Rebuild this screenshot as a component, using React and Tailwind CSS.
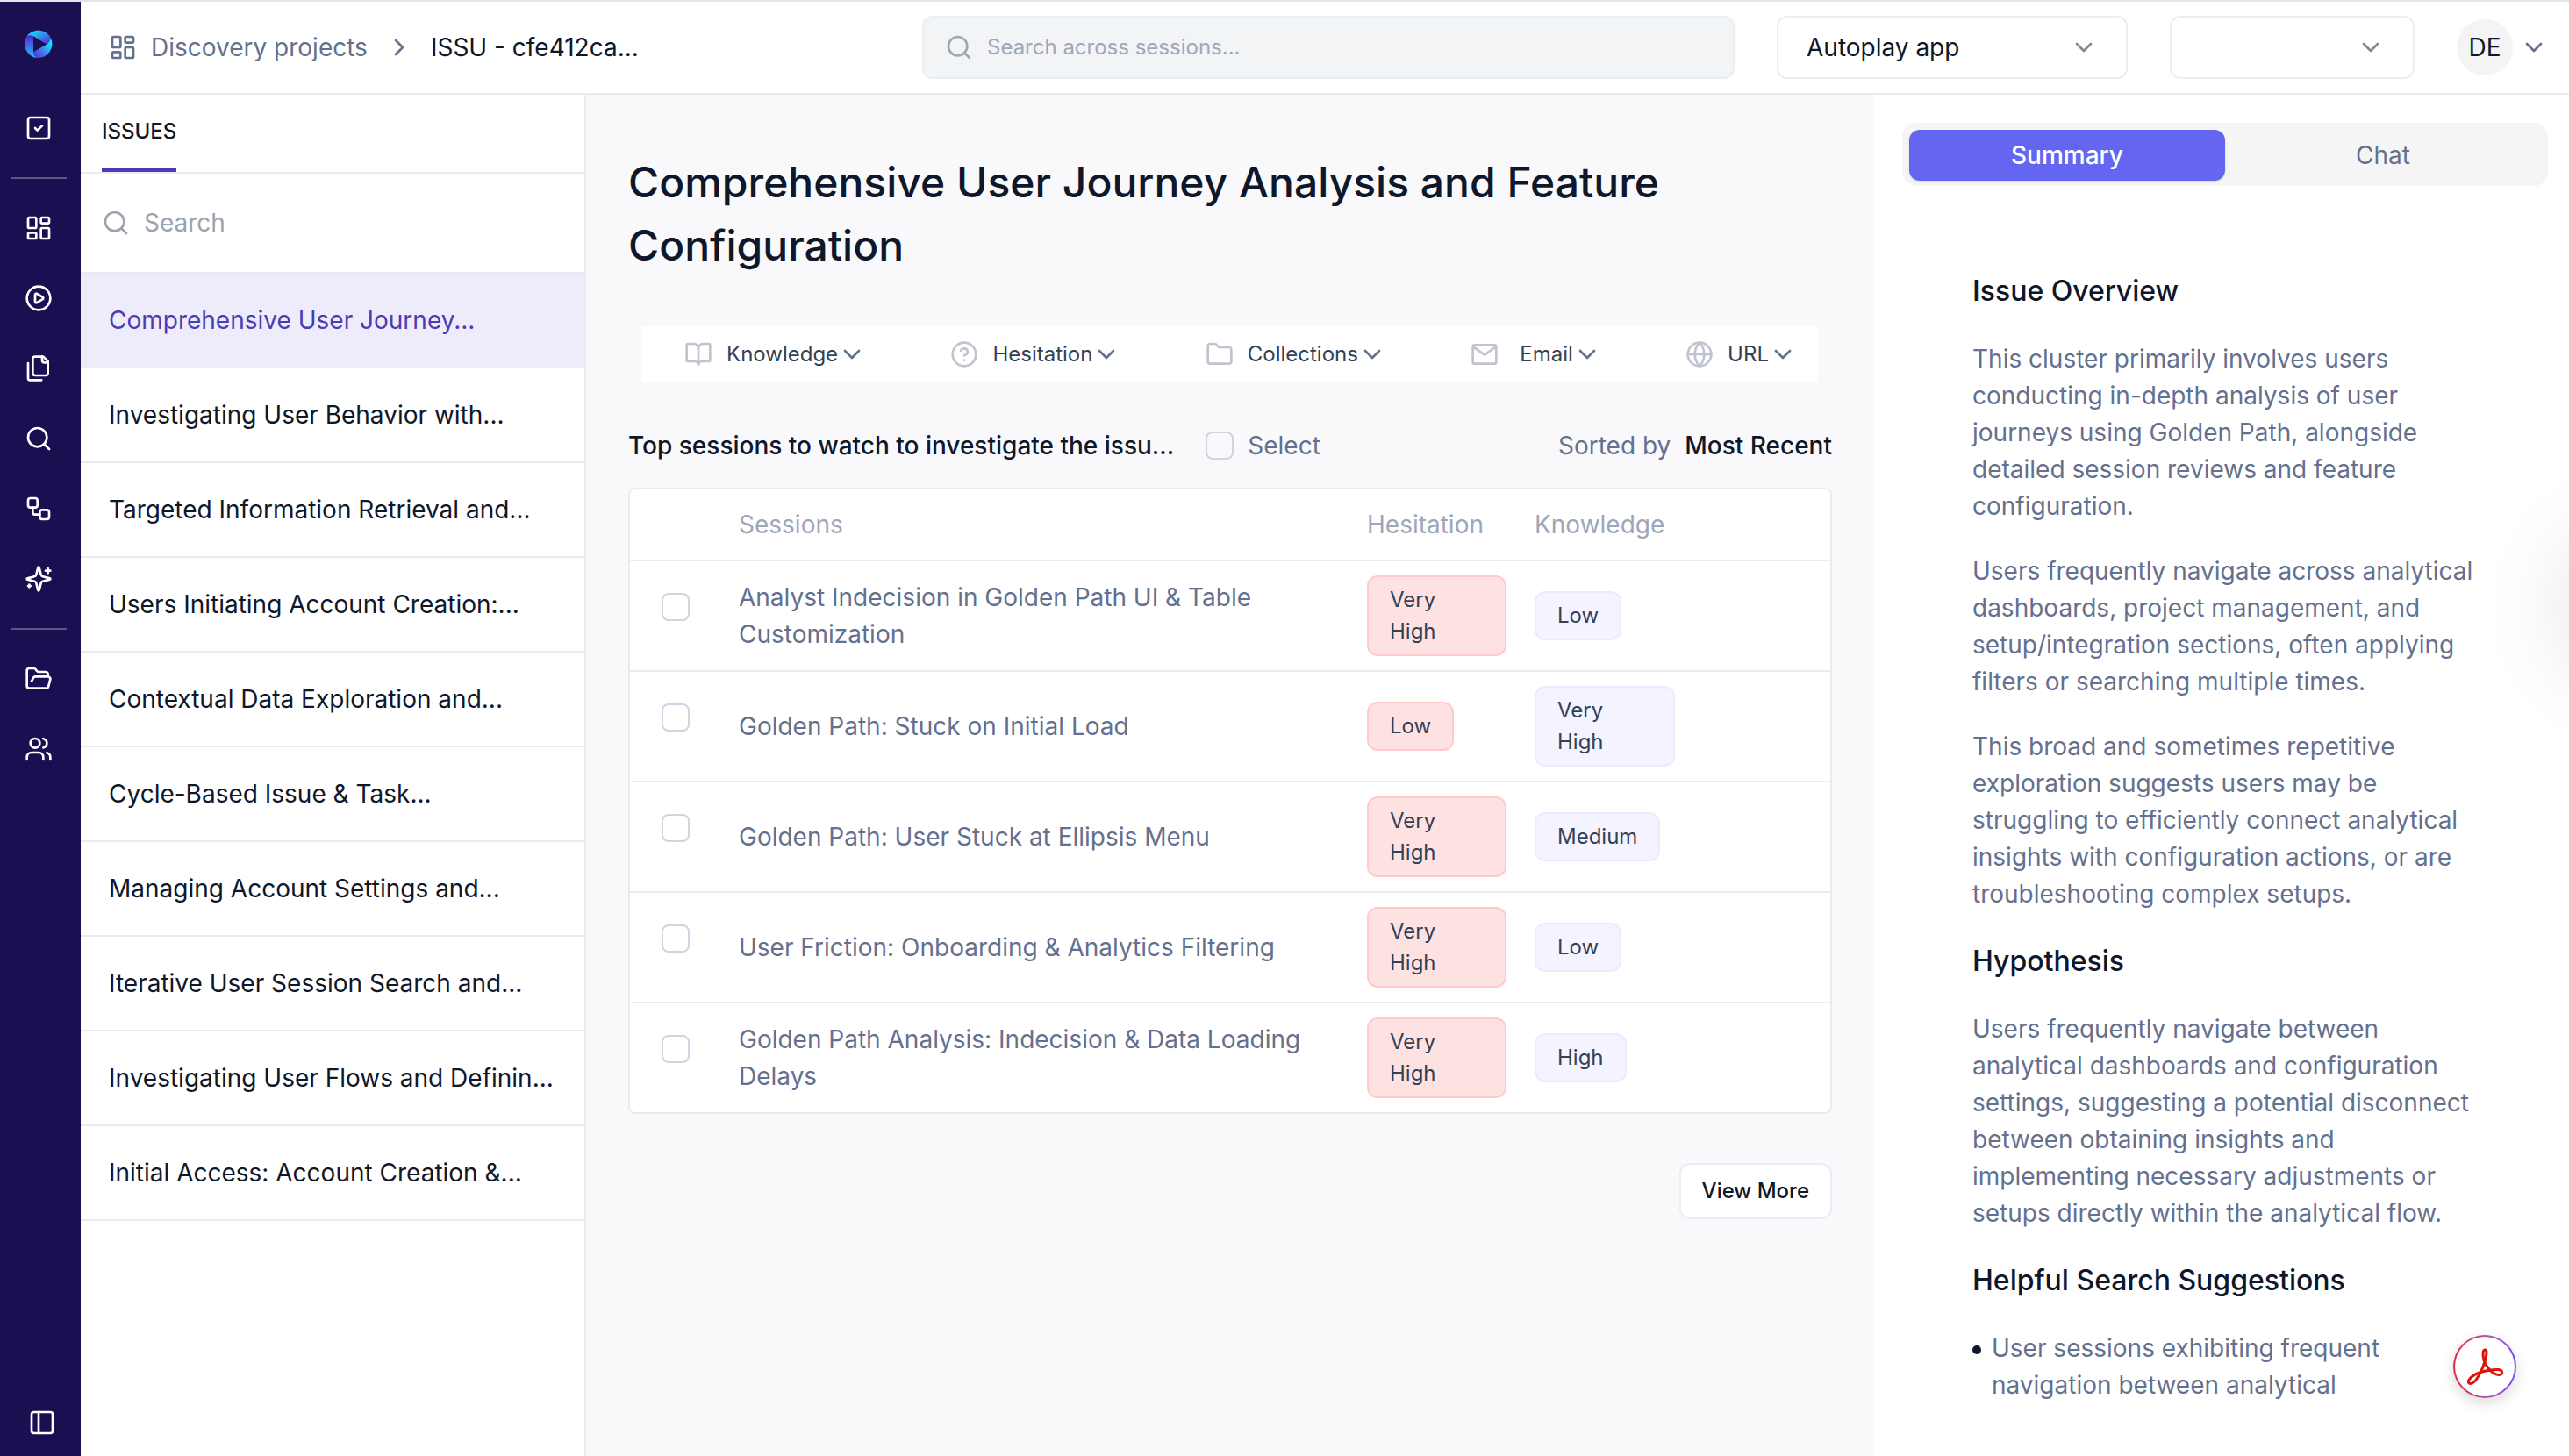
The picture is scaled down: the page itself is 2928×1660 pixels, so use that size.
import {
  BookOpen,
  ChevronDown,
  ChevronRight,
  CircleHelp,
  CirclePlay,
  Folder,
  FolderOpen,
  Globe,
  LayoutDashboard,
  PanelLeft,
  Search,
  SquareCheck,
  Users,
  Workflow,
} from "lucide-react";

const navGroups = [
  [{ label: "Tasks", icon: SquareCheck }],
  [
    { label: "Projects", icon: LayoutDashboard },
    { label: "Sessions", icon: CirclePlay },
    { label: "Files", icon: FilesIcon },
    { label: "Search", icon: Search },
    { label: "Workflows", icon: Workflow },
    { label: "Insights", icon: SparklesIcon },
  ],
  [
    { label: "Folders", icon: FolderOpen },
    { label: "Team", icon: Users },
  ],
];

const issues = [
  "Comprehensive User Journey...",
  "Investigating User Behavior with...",
  "Targeted Information Retrieval and...",
  "Users Initiating Account Creation:...",
  "Contextual Data Exploration and...",
  "Cycle-Based Issue & Task...",
  "Managing Account Settings and...",
  "Iterative User Session Search and...",
  "Investigating User Flows and Definin...",
  "Initial Access: Account Creation &...",
];

const filters = [
  { label: "Knowledge", icon: BookOpen },
  { label: "Hesitation", icon: CircleHelp },
  { label: "Collections", icon: Folder },
  { label: "Email", icon: MailIcon, gap: "gap-6" },
  { label: "URL", icon: Globe },
];

const sessions = [
  {
    title: "Analyst Indecision in Golden Path UI & Table Customization",
    hesitation: "Very High",
    knowledge: "Low",
  },
  { title: "Golden Path: Stuck on Initial Load", hesitation: "Low", knowledge: "Very High" },
  { title: "Golden Path: User Stuck at Ellipsis Menu", hesitation: "Very High", knowledge: "Medium" },
  { title: "User Friction: Onboarding & Analytics Filtering", hesitation: "Very High", knowledge: "Low" },
  {
    title: "Golden Path Analysis: Indecision & Data Loading Delays",
    hesitation: "Very High",
    knowledge: "High",
  },
];

function StrokeIcon({ className, children }) {
  return (
    <svg
      className={className}
      viewBox="0 0 24 24"
      fill="none"
      stroke="currentColor"
      strokeWidth="2"
      strokeLinecap="round"
      strokeLinejoin="round"
    >
      {children}
    </svg>
  );
}

function MailIcon({ className }) {
  return (
    <StrokeIcon className={className}>
      <rect x="2" y="4" width="20" height="16" rx="1.5" />
      <path d="M2.5 5.5 12 12.5l9.5-7" />
    </StrokeIcon>
  );
}

function FilesIcon({ className }) {
  return (
    <StrokeIcon className={className}>
      <path d="M20 7h-3a2 2 0 0 1-2-2V2" />
      <path d="M9 18a2 2 0 0 1-2-2V4a2 2 0 0 1 2-2h7l4 4v10a2 2 0 0 1-2 2Z" />
      <path d="M3 7.6v12.8A1.6 1.6 0 0 0 4.6 22h9.8" />
    </StrokeIcon>
  );
}

function SparklesIcon({ className }) {
  return (
    <StrokeIcon className={className}>
      <path d="M9.937 15.5A2 2 0 0 0 8.5 14.063l-6.135-1.582a.5.5 0 0 1 0-.962L8.5 9.936A2 2 0 0 0 9.937 8.5l1.582-6.135a.5.5 0 0 1 .963 0L14.063 8.5A2 2 0 0 0 15.5 9.937l6.135 1.581a.5.5 0 0 1 0 .964L15.5 14.063a2 2 0 0 0-1.437 1.437l-1.582 6.135a.5.5 0 0 1-.963 0z" />
      <path d="M20 3v4" />
      <path d="M22 5h-4" />
      <path d="M4 17v2" />
      <path d="M5 18H3" />
    </StrokeIcon>
  );
}

function Logo() {
  return (
    <svg className="size-8" viewBox="0 0 32 32">
      <defs>
        <linearGradient id="logoTop" x1="0" y1="0" x2="1" y2="1">
          <stop offset="0.1" stopColor="#12e4fb" />
          <stop offset="1" stopColor="#5a1fd8" />
        </linearGradient>
        <linearGradient id="logoRight" x1="1" y1="0" x2="0" y2="1">
          <stop offset="0.2" stopColor="#12e4fb" />
          <stop offset="1" stopColor="#6a14d6" />
        </linearGradient>
        <linearGradient id="logoLeft" x1="0" y1="0" x2="0" y2="1">
          <stop offset="0" stopColor="#5a24d8" />
          <stop offset="1" stopColor="#19c8f5" />
        </linearGradient>
      </defs>
      <path d="M2.5 7.5A16 16 0 0 1 30 9.5Q29 14 25 16.5L10 7.5Q6 5.5 2.5 7.5Z" fill="url(#logoTop)" />
      <path d="M30 9.5A16 16 0 0 1 14.5 32Q10 30 10 25L25 16.5Q29 14 30 9.5Z" fill="url(#logoRight)" />
      <path d="M14.5 32A16 16 0 0 1 2.5 7.5Q6 5.5 10 7.5V25Q10 30 14.5 32Z" fill="url(#logoLeft)" />
      <path d="M10 7.5 25 16.5 10 25Z" fill="#190f51" />
    </svg>
  );
}

function AcrobatIcon() {
  return (
    <svg className="size-11" viewBox="0 0 44 44" fill="none" stroke="#d9150c" strokeWidth="3" strokeLinejoin="round">
      <path d="M6 41.5C12 41.5 20 24 22.5 15C24.5 7 24.5 3 22.5 3C19.500 3 19.500 8 21 15C24 23 31 31.500 38 31.500C43 31.500 43 26 37.5 25.5C29 25 14 28 7.5 33.500C2 38 2.500 41.500 6 41.500Z" />
    </svg>
  );
}

function Sidebar() {
  return (
    <aside className="flex w-[92px] shrink-0 flex-col bg-[#190f51] pb-[22px] text-white">
      <a href="#home" aria-label="Home" className="ml-7 mt-8 mb-10 w-8">
        <Logo />
      </a>
      <nav className="flex w-[88px] flex-col">
        {navGroups.map((group, i) => (
          <div
            key={i}
            className={i > 0 ? "before:mx-3 before:my-4 before:block before:h-0.5 before:bg-white/30" : ""}
          >
            {group.map(({ label, icon: Icon }) => (
              <a
                key={label}
                href={`#${label.toLowerCase()}`}
                aria-label={label}
                className="flex h-20 items-center justify-center"
              >
                <Icon className="size-8" />
              </a>
            ))}
          </div>
        ))}
      </nav>
      <button type="button" aria-label="Toggle sidebar" className="mt-auto ml-8 w-8">
        <PanelLeft className="size-8" />
      </button>
    </aside>
  );
}

function HeaderSelect({ label, value, className }) {
  return (
    <div className={`relative ${className}`}>
      <select
        aria-label={label}
        className="h-[72px] w-full appearance-none rounded-xl border-2 border-[#e9eef6] bg-white pl-8 pr-20 text-[28px] text-[#0f172a]"
      >
        <option>{value}</option>
      </select>
      <ChevronDown className="pointer-events-none absolute top-5 right-[34px] size-8 text-[#85859a]" />
    </div>
  );
}

function Header() {
  return (
    <header className="flex h-[106px] shrink-0 items-center border-b-2 border-[#ebebef] bg-white pr-6">
      <nav aria-label="Breadcrumb" className="flex flex-1 items-center pl-8 text-[28px]">
        <a href="#projects" className="flex items-center gap-4 text-[#64708f]">
          <LayoutDashboard className="size-8" />
          Discovery projects
        </a>
        <ChevronRight className="mx-5 size-8 text-[#64708f]" />
        <span className="text-[#0f172a]">ISSU - cfe412ca...</span>
      </nav>
      <div className="flex h-[72px] max-w-[926px] flex-1 items-center gap-4 rounded-xl border-2 border-[#e9eef6] bg-[#f3f4f6] px-6 text-[#9ea6ba]">
        <Search className="size-8 shrink-0" />
        <input
          type="search"
          aria-label="Search across sessions"
          placeholder="Search across sessions..."
          className="w-full bg-transparent text-2xl outline-none placeholder:text-[#9ea6ba]"
        />
      </div>
      <HeaderSelect label="Application" value="Autoplay app" className="ml-12 w-[400px]" />
      <HeaderSelect label="Environment" value="" className="ml-12 w-[279px]" />
      <button type="button" aria-label="Account" className="ml-12 flex items-center gap-2">
        <span className="flex size-16 items-center justify-center rounded-full bg-[#f4f4f5] text-[28px] text-[#0f172a]">
          DE
        </span>
        <ChevronDown className="size-8 text-[#64708f]" />
      </button>
    </header>
  );
}

function IssueList() {
  return (
    <section className="w-[576px] shrink-0 border-r-2 border-[#ebebef] bg-white">
      <div className="flex h-[90px] border-b-2 border-[#ebebef] px-6">
        <button
          type="button"
          className="border-b-4 border-[#4a3cb4] text-2xl font-medium text-[#0f172a]"
        >
          ISSUES
        </button>
      </div>
      <div className="flex h-[114px] items-center gap-4 border-b-2 border-[#ebebef] px-6 text-[#9ca3af]">
        <Search className="size-8 shrink-0" />
        <input
          type="search"
          aria-label="Search issues"
          placeholder="Search"
          className="w-full text-[28px] outline-none placeholder:text-[#9ca3af]"
        />
      </div>
      <ul>
        {issues.map((issue, i) => (
          <li key={issue} className="border-b-2 border-[#ebebef]">
            <a
              href={`#issue-${i + 1}`}
              className={
                i === 0
                  ? "flex h-[106px] items-center bg-[#eeecfb] px-8 text-[28px] whitespace-nowrap text-[#4a3cb4]"
                  : "flex h-[106px] items-center px-8 text-[28px] whitespace-nowrap text-[#0f172a]"
              }
            >
              {issue}
            </a>
          </li>
        ))}
      </ul>
    </section>
  );
}

function Checkbox(props) {
  return (
    <input
      type="checkbox"
      className="block size-8 appearance-none rounded-lg border-2 border-[#cfd4e0]"
      {...props}
    />
  );
}

function SessionsTable() {
  return (
    <div className="rounded-lg border-2 border-[#ebebef] bg-white">
      <table className="w-full table-fixed text-left text-[28px] leading-[42px]">
        <colgroup>
          <col className="w-[108px]" />
          <col />
          <col className="w-[191px]" />
          <col className="w-[192px]" />
          <col className="w-[161px]" />
        </colgroup>
        <thead>
          <tr className="h-[81px] border-b-2 border-[#ebebef] text-[#9ea6ba]">
            <td />
            <th className="px-4 font-normal">Sessions</th>
            <th className="px-4 font-normal">Hesitation</th>
            <th className="px-4 font-normal">Knowledge</th>
            <td />
          </tr>
        </thead>
        <tbody>
          {sessions.map((session) => (
            <tr key={session.title} className="border-b-2 border-[#ebebef] last:border-b-0">
              <td className="pb-5 pl-9">
                <Checkbox aria-label={session.title} />
              </td>
              <td className="px-4 text-[#64708f]">{session.title}</td>
              <td className="px-4 py-4">
                <span className="block w-fit rounded-xl border-2 border-[#fecaca] bg-[#fee2e2] px-6 py-2 text-2xl leading-9 text-[#334155]">
                  {session.hesitation}
                </span>
              </td>
              <td className="px-4 py-4">
                <span className="block w-fit rounded-xl border-2 border-[#ede9fe] bg-[#f5f3ff] px-6 py-2 text-2xl leading-9 text-[#334155]">
                  {session.knowledge}
                </span>
              </td>
              <td />
            </tr>
          ))}
        </tbody>
      </table>
    </div>
  );
}

function IssueDetail() {
  return (
    <main className="min-w-0 flex-1 bg-[#f9f9fc] px-12 pt-16">
      <h1 className="text-5xl leading-[72px] font-medium text-[#0f172a]">
        Comprehensive User Journey Analysis and Feature Configuration
      </h1>
      <div className="mx-4 mt-14 flex h-16 items-center justify-between bg-white pr-6 pl-12">
        {filters.map(({ label, icon: Icon, gap = "gap-4" }) => (
          <button key={label} type="button" className={`flex items-center text-2xl text-[#334155] ${gap}`}>
            <Icon className="size-8 text-[#c0c4d0]" />
            <span className="flex items-center">
              {label}
              <ChevronDown className="size-8 text-[#64708f]" />
            </span>
          </button>
        ))}
      </div>
      <div className="mt-13 mb-7 flex h-10 items-center text-[28px]">
        <h2 className="font-medium text-[#0f172a]">Top sessions to watch to investigate the issu...</h2>
        <label className="ml-9 flex items-center gap-4 text-[#64708f]">
          <Checkbox />
          Select
        </label>
        <p className="ml-auto flex gap-4 text-[#64708f]">
          Sorted by
          <button type="button" className="font-medium text-[#0f172a]">
            Most Recent
          </button>
        </p>
      </div>
      <SessionsTable />
      <div className="mt-14 flex justify-end">
        <button
          type="button"
          className="h-16 rounded-xl border-2 border-[#e9eef6] bg-white px-6 text-2xl font-medium text-[#0f172a]"
        >
          View More
        </button>
      </div>
    </main>
  );
}

function SummaryPanel() {
  return (
    <aside className="w-[792px] shrink-0 bg-white pt-8 pr-6 pl-8">
      <div role="tablist" className="flex h-[72px] rounded-2xl bg-[#f5f5f5] px-2 pt-2 pb-1.5 text-[28px]">
        <button
          type="button"
          role="tab"
          aria-selected="true"
          className="flex-1 rounded-xl bg-[#6466f1] font-medium text-white shadow-sm"
        >
          Summary
        </button>
        <button type="button" role="tab" aria-selected="false" className="flex-1 text-[#64708f]">
          Chat
        </button>
      </div>
      <div className="mx-20 mt-24 flex flex-col gap-8 text-[28px] leading-[42px] text-[#64708f]">
        <h3 className="text-[32px] leading-[48px] font-medium text-[#0f172a]">Issue Overview</h3>
        <p>
          This cluster primarily involves users conducting in-depth analysis of user journeys using
          Golden Path, alongside detailed session reviews and feature configuration.
        </p>
        <p>
          Users frequently navigate across analytical dashboards, project management, and
          setup/integration sections, often applying filters or searching multiple times.
        </p>
        <p>
          This broad and sometimes repetitive exploration suggests users may be struggling to
          efficiently connect analytical insights with configuration actions, or are troubleshooting
          complex setups.
        </p>
        <h3 className="text-[32px] leading-[48px] font-medium text-[#0f172a]">Hypothesis</h3>
        <p>
          Users frequently navigate between analytical dashboards and configuration settings,
          suggesting a potential disconnect between obtaining insights and implementing necessary
          adjustments or setups directly within the analytical flow.
        </p>
        <h3 className="text-[32px] leading-[48px] font-medium text-[#0f172a]">
          Helpful Search Suggestions
        </h3>
        <ul>
          <li className="flex gap-3 before:mt-[18px] before:size-2.5 before:shrink-0 before:rounded-full before:bg-[#0f172a]">
            User sessions exhibiting frequent navigation between analytical
          </li>
        </ul>
      </div>
    </aside>
  );
}

export default function App() {
  return (
    <div className="flex min-h-screen border-t-2 border-[#e1e4ef] bg-white font-[Inter,sans-serif]">
      <Sidebar />
      <div className="flex min-w-0 flex-1 flex-col">
        <Header />
        <div className="flex flex-1">
          <IssueList />
          <IssueDetail />
          <SummaryPanel />
        </div>
      </div>

      <div className="pointer-events-none fixed top-[620px] -right-36 size-36 rounded-full shadow-[0_0_110px_rgba(0,0,0,0.14)]" />

      <button
        type="button"
        aria-label="Open in Acrobat"
        className="fixed right-[60px] bottom-[66px] size-[72px] rounded-full bg-linear-to-r from-[#e8203a] to-[#8050f0] p-0.5 shadow-[0_6px_16px_rgba(0,0,0,0.14)]"
      >
        <span className="flex size-full items-center justify-center rounded-full bg-white">
          <AcrobatIcon />
        </span>
      </button>
    </div>
  );
}
